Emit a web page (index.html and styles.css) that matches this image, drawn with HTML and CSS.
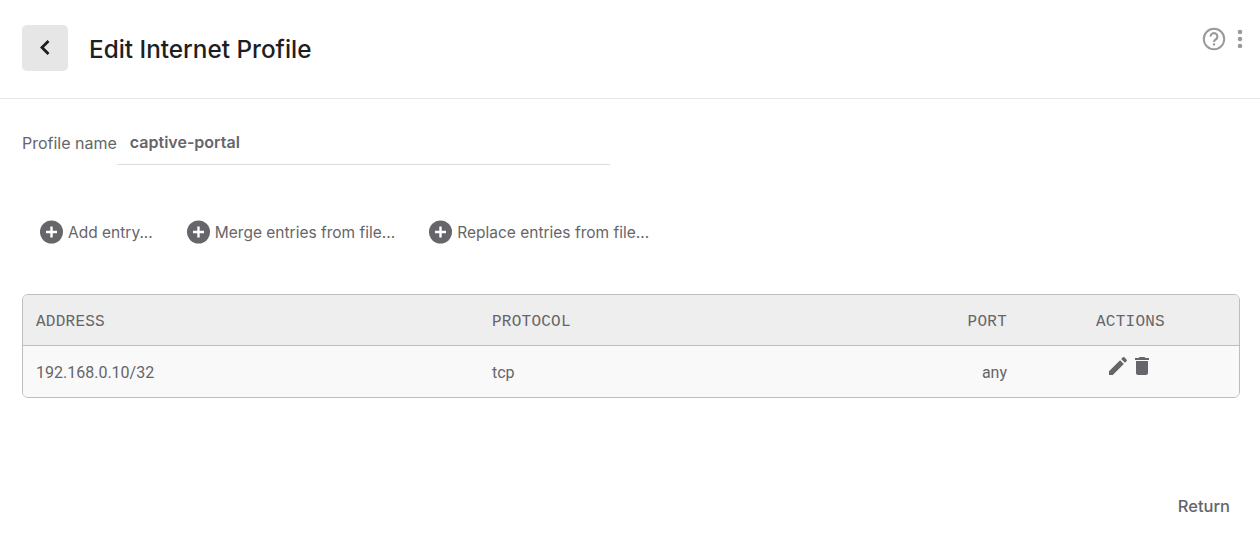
FILE: index.html
```html
<!DOCTYPE html>
<html lang="en">
<head>
    <meta charset="UTF-8">
    <title>Edit Internet Profile</title>
    <link rel="stylesheet" href="styles.css">
</head>
<body>
    <header class="page-header">
        <button class="back-btn" aria-label="Back">
            <svg width="24" height="24" viewBox="0 0 24 24"><path d="M15.5 5L9 11.5l6.5 6.5" fill="none" stroke="#1c1c1c" stroke-width="2.8"/></svg>
        </button>
        <h1>Edit Internet Profile</h1>
        <div class="header-icons">
            <svg width="24" height="24" viewBox="0 0 24 24"><circle cx="12" cy="12" r="10.2" fill="none" stroke="#9a9a9a" stroke-width="2"/><path d="M8.6 9.6a3.4 3.4 0 1 1 5.3 2.7c-1.3.8-1.9 1.3-1.9 2.7" fill="none" stroke="#9a9a9a" stroke-width="2.2"/><rect x="10.9" y="16.3" width="2.2" height="2.2" fill="#9a9a9a"/></svg>
            <svg width="6" height="20" viewBox="0 0 6 20"><circle cx="3" cy="3" r="2.3" fill="#9a9a9a"/><circle cx="3" cy="10" r="2.3" fill="#9a9a9a"/><circle cx="3" cy="17" r="2.3" fill="#9a9a9a"/></svg>
        </div>
    </header>

    <div class="name-row">
        <label for="profileName">Profile name</label>
        <input type="text" id="profileName" value="captive-portal">
    </div>

    <div class="toolbar">
        <a class="add-link">
            <svg width="24" height="24" viewBox="0 0 24 24"><circle cx="11.5" cy="12" r="11.5" fill="#666569"/><path d="M11.5 6.5v11M6 12h11" stroke="#fff" stroke-width="2.4"/></svg>
            Add entry...
        </a>
        <a class="add-link">
            <svg width="24" height="24" viewBox="0 0 24 24"><circle cx="11.5" cy="12" r="11.5" fill="#666569"/><path d="M11.5 6.5v11M6 12h11" stroke="#fff" stroke-width="2.4"/></svg>
            Merge entries from file...
        </a>
        <a class="add-link">
            <svg width="24" height="24" viewBox="0 0 24 24"><circle cx="11.5" cy="12" r="11.5" fill="#666569"/><path d="M11.5 6.5v11M6 12h11" stroke="#fff" stroke-width="2.4"/></svg>
            Replace entries from file...
        </a>
    </div>

    <div class="table-wrap">
        <table>
            <thead>
                <tr>
                    <th class="col-address">Address</th>
                    <th class="col-protocol">Protocol</th>
                    <th class="col-port">Port</th>
                    <th class="col-actions">Actions</th>
                </tr>
            </thead>
            <tbody>
                <tr>
                    <td>192.168.0.10/32</td>
                    <td>tcp</td>
                    <td class="col-port">any</td>
                    <td class="cell-actions">
                        <div class="action-icons">
                            <svg width="24" height="24" viewBox="0 0 24 24"><path d="M3 17.25V21h3.75L17.81 9.94l-3.75-3.75L3 17.25zM20.71 7.04a1 1 0 0 0 0-1.41l-2.34-2.34a1 1 0 0 0-1.41 0l-1.83 1.83 3.75 3.75 1.83-1.83z" fill="#666569"/></svg>
                            <svg width="24" height="24" viewBox="0 0 24 24"><path d="M6 19c0 1.1.9 2 2 2h8c1.1 0 2-.9 2-2V7H6v12zM19 4h-3.5l-1-1h-5l-1 1H5v2h14V4z" fill="#666569"/></svg>
                        </div>
                    </td>
                </tr>
            </tbody>
        </table>
    </div>

    <div class="footer">
        <a class="return-link">Return</a>
    </div>
</body>
</html>
```

FILE: styles.css
```css
body {
    margin: 0;
    font-family: Inter, "Liberation Sans", sans-serif;
    color: #666569;
    background-color: #fff;
}
.page-header {
    display: flex;
    align-items: center;
    height: 96px;
    padding: 0 22px 2px;
    border-bottom: 1px solid #e8e8e8;
}
.back-btn {
    display: flex;
    align-items: center;
    justify-content: center;
    width: 46px;
    height: 46px;
    padding: 0;
    border: none;
    border-radius: 5px;
    background-color: #e6e6e6;
}
h1 {
    margin: 2px 0 0 21px;
    font-size: 24.3px;
    font-weight: 500;
    color: #201e1e;
}
.header-icons {
    display: flex;
    align-items: center;
    gap: 11px;
    margin-left: auto;
    margin-right: -5px;
    align-self: flex-start;
    padding-top: 27px;
}
.name-row {
    display: flex;
    align-items: center;
    margin: 27px 0 0 22px;
    height: 39px;
}
.name-row label {
    margin-bottom: 6px;
    font-size: 16px;
}
.name-row input {
    width: 480px;
    height: 32px;
    padding: 0 0 6px 13px;
    border: none;
    border-bottom: 1px solid #dcdcdc;
    font-family: inherit;
    font-size: 16px;
    font-weight: 600;
    color: #666569;
    outline: none;
}
.toolbar {
    display: flex;
    gap: 34px;
    margin: 54px 0 0 40px;
    height: 26px;
}
.add-link {
    display: flex;
    align-items: center;
    gap: 4px;
    font-size: 15.5px;
}
.table-wrap {
    margin: 49px 20px 0 22px;
    border: 1px solid #bdbdbd;
    border-radius: 6px;
    overflow: hidden;
}
table {
    width: 100%;
    border-collapse: collapse;
    table-layout: fixed;
}
th {
    height: 46px;
    padding: 4px 13px 0;
    background-color: #eeeeee;
    border-bottom: 1px solid #bdbdbd;
    font-family: "Liberation Mono", monospace;
    font-size: 16px;
    font-weight: 400;
    letter-spacing: 0.25px;
    text-align: left;
    text-transform: uppercase;
}
tbody tr {
    height: 51px;
}
td {
    padding: 2px 13px 0;
    background-color: #f9f9f9;
    font-family: Roboto, sans-serif;
    font-size: 16px;
}
.col-address { width: 430px; }
.col-protocol { width: 424px; }
.col-port { width: 65px; text-align: right; }
th.col-actions { padding-left: 76px; }
td.cell-actions {
    padding: 8px 0 0 86px;
    vertical-align: top;
}
.action-icons {
    display: flex;
}
.footer {
    display: flex;
    justify-content: flex-end;
    margin: 98px 30px 0 0;
}
.return-link {
    font-size: 16.5px;
    font-weight: 500;
}
```
